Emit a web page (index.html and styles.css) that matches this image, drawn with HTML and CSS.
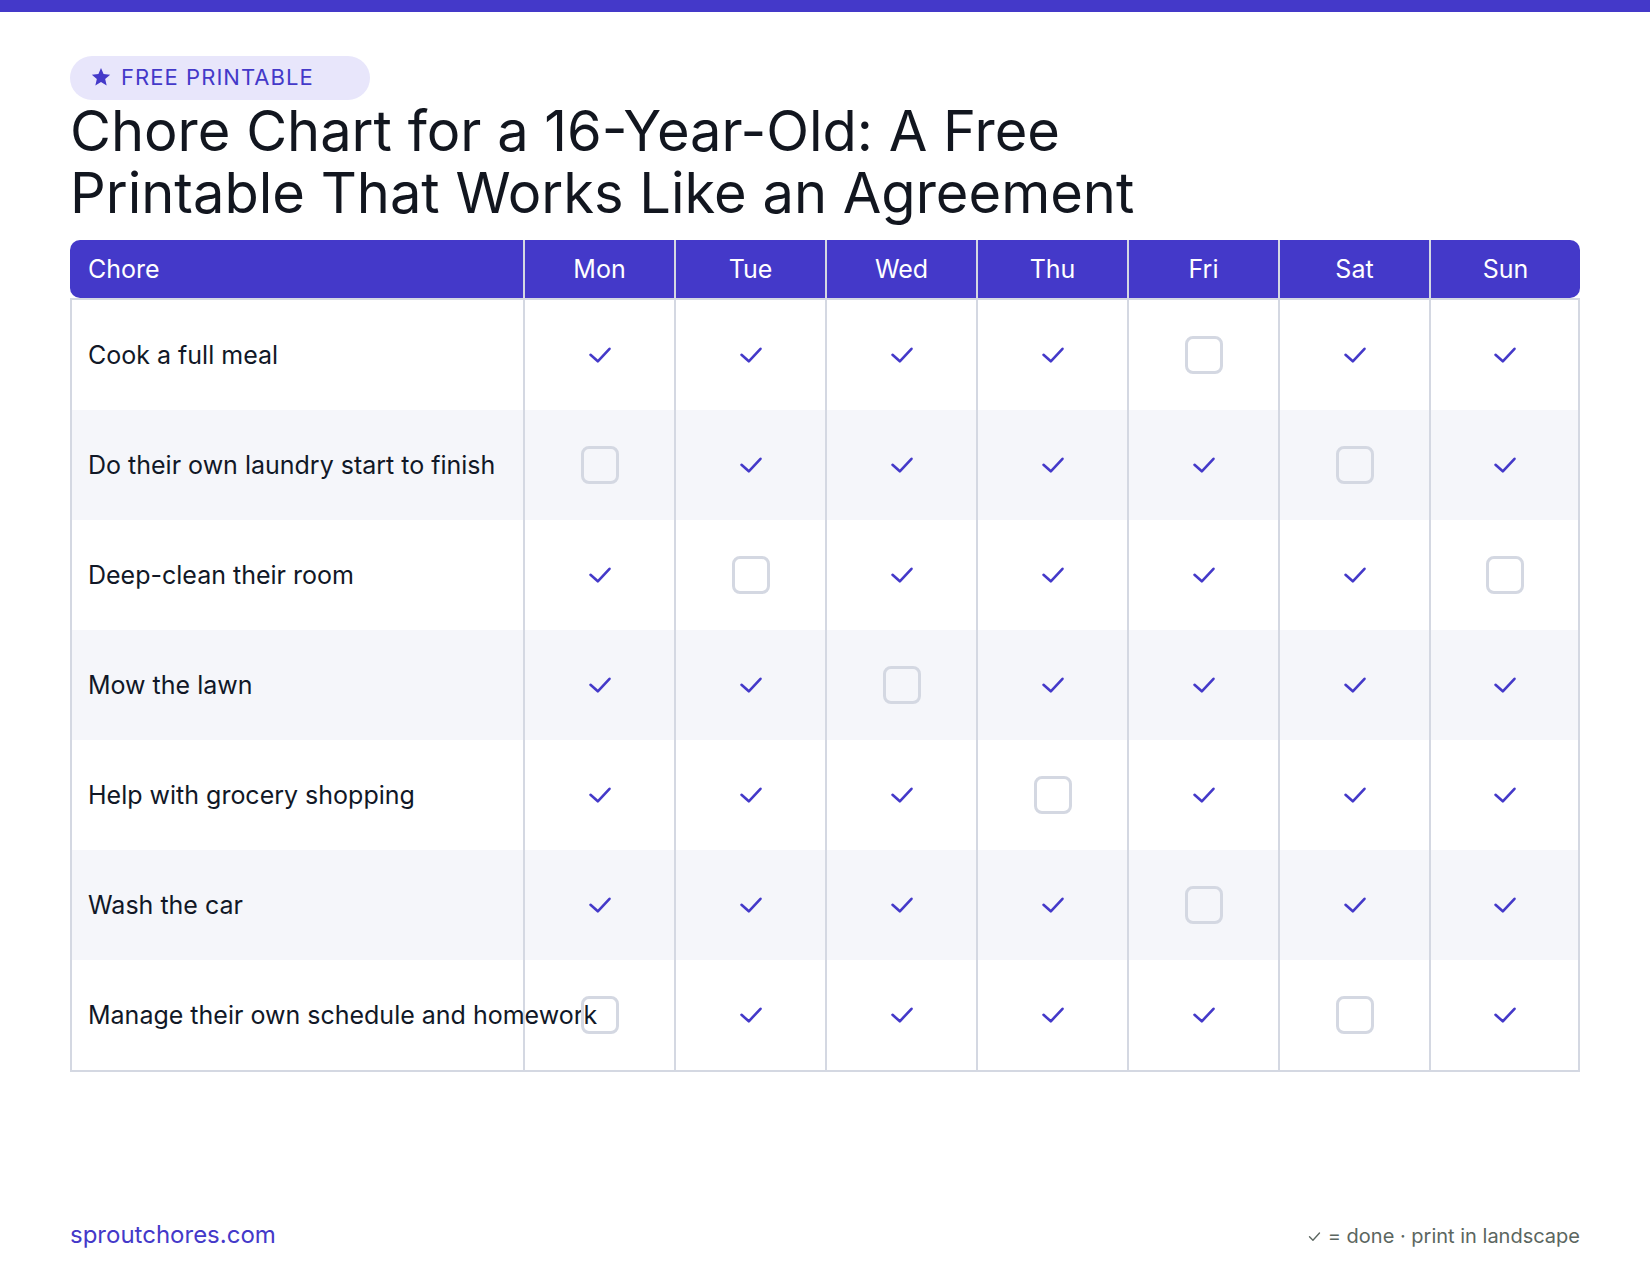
FILE: index.html
```html
<!DOCTYPE html>
<html lang="en">
<head>
<meta charset="utf-8">
<title>Chore Chart for a 16-Year-Old</title>
<link rel="stylesheet" href="styles.css">
</head>
<body>
<div class="topbar"></div>
<div class="page">
  <span class="badge">
    <svg class="badge-star" viewBox="0 0 24 24" width="20" height="20" aria-hidden="true"><path d="M12 1.2l3.1 7.3 7.9.7-6 5.2 1.8 7.8L12 18.1l-6.8 4.1 1.8-7.8-6-5.2 7.9-.7z" fill="currentColor"/></svg>
    <span class="badge-text">FREE PRINTABLE</span>
  </span>
  <h1 class="title">Chore Chart for a 16-Year-Old: A Free Printable That Works Like an Agreement</h1>

  <table class="chart">
    <colgroup>
      <col class="col-chore">
      <col class="col-day"><col class="col-day"><col class="col-day"><col class="col-day"><col class="col-day"><col class="col-day"><col class="col-day">
    </colgroup>
    <thead>
      <tr>
        <th class="th-chore">Chore</th>
        <th>Mon</th><th>Tue</th><th>Wed</th><th>Thu</th><th>Fri</th><th>Sat</th><th>Sun</th>
      </tr>
    </thead>
    <tbody id="rows"></tbody>
  </table>

  <footer class="footer">
    <span class="site">sproutchores.com</span>
    <span class="legend"><svg class="legend-check" viewBox="0 0 24 24" width="15" height="15" aria-hidden="true"><polyline points="4 12.5 9.5 18 20 6.5" fill="none" stroke="currentColor" stroke-width="2.2" stroke-linecap="round" stroke-linejoin="round"/></svg> = done · print in landscape</span>
  </footer>
</div>
<script src="app.js"></script>
</body>
</html>
```

FILE: app.js
```js
const chores = [
  ["Cook a full meal",                         [1,1,1,1,0,1,1]],
  ["Do their own laundry start to finish",     [0,1,1,1,1,0,1]],
  ["Deep-clean their room",                    [1,0,1,1,1,1,0]],
  ["Mow the lawn",                             [1,1,0,1,1,1,1]],
  ["Help with grocery shopping",               [1,1,1,0,1,1,1]],
  ["Wash the car",                             [1,1,1,1,0,1,1]],
  ["Manage their own schedule and homework",   [0,1,1,1,1,0,1]]
];
const check = '<svg class="check" viewBox="0 0 24 24" width="24" height="24" aria-hidden="true"><polyline points="2.5 11.8 9.8 18.3 21.5 5.8" fill="none" stroke="currentColor" stroke-width="2.6" stroke-linecap="round" stroke-linejoin="round"/></svg>';
const box = '<span class="box"></span>';
const tbody = document.getElementById("rows");
tbody.innerHTML = chores.map(([name, days]) =>
  '<tr><td class="td-chore">' + name + '</td>' +
  days.map(d => '<td class="td-day">' + (d ? check : box) + '</td>').join('') +
  '</tr>'
).join('');
```

FILE: styles.css
```css
html, body {
  margin: 0;
  padding: 0;
  background: #ffffff;
}

body {
  font-family: "Inter", "Noto Sans", "Liberation Sans", sans-serif;
  color: #111827;
}

.topbar {
  height: 12px;
  background: #4439c9;
}

.page {
  box-sizing: border-box;
  min-height: calc(100vh - 12px);
  padding: 0 70px;
  display: flex;
  flex-direction: column;
}

.badge {
  align-self: flex-start;
  margin-top: 44px;
  box-sizing: border-box;
  width: 300px;
  height: 44px;
  padding: 0 21px;
  border-radius: 22px;
  background: #e8e6fb;
  color: #4439c9;
  display: flex;
  align-items: center;
  gap: 10px;
}

.badge-star {
  flex: none;
  margin-top: -3px;
}

.badge-text {
  font-size: 22px;
  letter-spacing: 0.048em;
  line-height: 1;
  margin-top: -3px;
}

.title {
  margin: 0;
  max-width: 1200px;
  font-size: 56px;
  line-height: 62px;
  font-weight: 400;
  color: #12161f;
  letter-spacing: 0;
}

.chart {
  margin-top: 16px;
  width: 100%;
  table-layout: fixed;
  border-collapse: separate;
  border-spacing: 0;
}

.col-chore { width: 30%; }
.col-day { width: 10%; }

.chart th {
  height: 58px;
  padding: 0;
  background: #4439c9;
  color: #ffffff;
  font-size: 25px;
  font-weight: 400;
  text-align: center;
  border-left: 2px solid #d4d8e2;
}

.chart th.th-chore {
  text-align: left;
  padding-left: 18px;
  border-left: none;
  border-radius: 10px 0 0 10px;
}

.chart th:last-child {
  border-radius: 0 10px 10px 0;
}

.chart td {
  box-sizing: border-box;
  height: 110px;
  padding: 0;
  border-left: 2px solid #d4d8e2;
  vertical-align: middle;
}

.chart tbody tr:nth-child(even) td {
  background: #f5f6fa;
}

.chart tbody tr:first-child td {
  border-top: 2px solid #d4d8e2;
  height: 112px;
}

.chart tbody tr:last-child td {
  border-bottom: 2px solid #d4d8e2;
  height: 112px;
}

.chart td:last-child {
  border-right: 2px solid #d4d8e2;
}

.td-chore {
  padding-left: 16px !important;
  font-size: 25px;
  white-space: nowrap;
  color: #111827;
}

.td-day {
  text-align: center;
  line-height: 0;
}

.check {
  color: #4439c9;
  display: inline-block;
  vertical-align: middle;
}

.box {
  display: inline-block;
  box-sizing: border-box;
  width: 38px;
  height: 38px;
  border: 3px solid #d4d8e2;
  border-radius: 8px;
  vertical-align: middle;
}

.footer {
  margin-top: auto;
  padding-bottom: 26px;
  display: flex;
  justify-content: space-between;
  align-items: baseline;
}

.site {
  font-size: 24px;
  line-height: 29px;
  color: #4439c9;
}

.legend {
  font-size: 20px;
  color: #5b6660;
}

.legend-check {
  vertical-align: -1px;
}
```
